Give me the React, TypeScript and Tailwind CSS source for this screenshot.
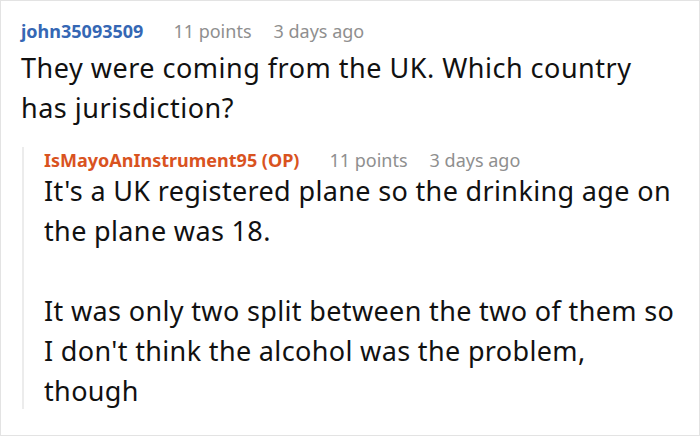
export default function App() {
  return (
    <div className="w-[700px] h-[436px] bg-white border border-[#e3e3e3] box-border font-['Noto_Sans','Open_Sans',sans-serif] overflow-hidden">
      <div className="pl-[20px] pt-[17px]">
        <div className="flex items-baseline text-[18px] leading-[26px]">
          <span className="font-bold text-[#3567b4]">john35093509</span>
          <span className="ml-[30px] text-[#8f8f8f]">11 points</span>
          <span className="ml-[22px] text-[#8f8f8f]">3 days ago</span>
        </div>
        <p className="mt-[4px] whitespace-nowrap text-[27px] leading-[40px] tracking-[0.5px] text-[#111]">
          They were coming from the UK. Which country<br />has jurisdiction?
        </p>
      </div>
      <div className="ml-[21px] mt-[28px] h-[262px] border-l-2 border-[#ececec] pl-[20px]">
        <div className="-mt-[9px] flex items-baseline text-[18px] leading-[26px]">
          <span className="font-bold text-[#d9531f]">IsMayoAnInstrument95 (OP)</span>
          <span className="ml-[30px] text-[#8f8f8f]">11 points</span>
          <span className="ml-[22px] text-[#8f8f8f]">3 days ago</span>
        </div>
        <div className="-mt-[2px] whitespace-nowrap text-[27px] leading-[40px] tracking-[0.35px] text-[#111]">
          <p>It's a UK registered plane so the drinking age on<br />the plane was 18.</p>
          <p className="mt-[40px]">
            It was only two split between the two of them so<br />I don't think the alcohol was the problem,<br />though
          </p>
        </div>
      </div>
    </div>
  );
}
